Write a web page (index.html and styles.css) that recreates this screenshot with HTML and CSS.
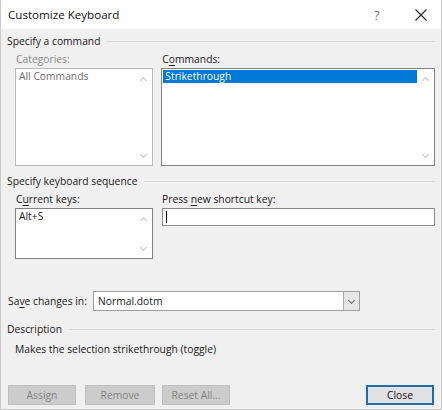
FILE: index.html
```html
<!DOCTYPE html>
<html>
<head>
<meta charset="utf-8">
<link rel="stylesheet" href="styles.css">
</head>
<body>
<div class="dialog">
  <div class="titlebar">
    <span class="title">Customize Keyboard</span>
    <span class="help">?</span>
    <span class="close-x"><svg width="12" height="12" viewBox="0 0 12 12"><path d="M0.5 0.5 L11.5 11.5 M11.5 0.5 L0.5 11.5" stroke="#222" stroke-width="1.1" fill="none"/></svg></span>
  </div>
  <div class="content">
    <div class="group-head"><span>Specify a command</span><span class="rule"></span></div>
    <div class="pair">
      <div class="col left">
        <div class="label disabled">Categories:</div>
        <div class="listbox tall disabled-box">
          <div class="items"><div class="item dim">All Commands</div></div>
          <div class="scroll"><span class="chev up"></span><span class="chev down"></span></div>
        </div>
      </div>
      <div class="col right">
        <div class="label">C<u>o</u>mmands:</div>
        <div class="listbox tall">
          <div class="items"><div class="item selected">Strikethrough</div></div>
          <div class="scroll"><span class="chev up"></span><span class="chev down"></span></div>
        </div>
      </div>
    </div>

    <div class="group-head second"><span>Specify keyboard sequence</span><span class="rule"></span></div>
    <div class="pair">
      <div class="col left">
        <div class="label">C<u>u</u>rrent keys:</div>
        <div class="listbox short">
          <div class="items"><div class="item">Alt+S</div></div>
          <div class="scroll"><span class="chev up"></span><span class="chev down"></span></div>
        </div>
      </div>
      <div class="col right">
        <div class="label">Press <u>n</u>ew shortcut key:</div>
        <div class="textbox"><span class="caret"></span></div>
      </div>
    </div>

    <div class="save-row">
      <span class="save-label">Sa<u>v</u>e changes in:</span>
      <div class="combo">
        <span class="combo-text">Normal.dotm</span>
        <span class="combo-btn"><span class="chev down dark"></span></span>
      </div>
    </div>

    <div class="group-head third"><span>Description</span><span class="rule"></span></div>
    <div class="desc">Makes the selection strikethrough (toggle)</div>

    <div class="buttons">
      <button class="btn disabled-btn">Assign</button>
      <button class="btn disabled-btn">Remove</button>
      <button class="btn disabled-btn">Reset All...</button>
      <span class="spacer"></span>
      <button class="btn default-btn">Close</button>
    </div>
  </div>
</div>
</body>
</html>
```

FILE: styles.css
```css
* { box-sizing: border-box; }
html, body { margin: 0; padding: 0; }
body {
  width: 442px;
  height: 410px;
  overflow: hidden;
  font-family: "Open Sans", "Noto Sans", sans-serif;
  font-size: 10.3px;
  color: #1a1a1a;
  background: #f0f0f0;
}
.dialog {
  width: 442px;
  height: 410px;
  background: #f0f0f0;
  border: 1px solid #c9c9c9;
  border-top: none;
  display: flex;
  flex-direction: column;
}
.titlebar {
  height: 29px;
  background: #fff;
  display: flex;
  align-items: center;
  padding-left: 7px;
}
.title { font-size: 11.6px; flex: 1; color: #111; }
.help { font-size: 13px; font-weight: 300; width: 14px; margin-right: 27px; color: #222; }
.close-x { width: 12px; height: 12px; margin-right: 14px; display: flex; }
.content {
  flex: 1;
  padding: 5px 6px 0 6px;
  display: flex;
  flex-direction: column;
}
.group-head {
  display: flex;
  align-items: center;
  height: 14px;
  line-height: 14px;
}
.group-head .rule {
  flex: 1;
  height: 1px;
  background: #dadada;
  margin-left: 7px;
  margin-top: 1px;
}
.group-head.second { margin-top: 8px; }
.group-head.third { margin-top: 11px; }
.pair {
  display: flex;
  gap: 8px;
  padding-left: 8px;
}
.col.left { width: 139px; }
.col.right { width: 275px; }
.label {
  height: 20px;
  line-height: 16px;
  padding-top: 3px;
  padding-left: 1px;
}
.label.disabled { color: #8a8a8a; }
u { text-decoration-thickness: 1px; text-underline-offset: 2px; }
.listbox {
  background: #fff;
  border: 1px solid #828282;
  display: flex;
}
.listbox.disabled-box { border-color: #b9b9b9; }
.listbox.tall { height: 98px; }
.listbox.short { height: 51px; }
.items { flex: 1; padding: 1px 0 0 1px; }
.item { height: 13px; line-height: 13px; padding-left: 2px; }
.item.dim { color: #6d6d6d; }
.item.selected { background: #0078d7; color: #fff; }
.scroll {
  width: 17px;
  display: flex;
  flex-direction: column;
  justify-content: space-between;
  align-items: center;
  padding: 7px 0 6px 0;
}
.chev {
  width: 5px;
  height: 5px;
  border-left: 1px solid #c2c2c2;
  border-top: 1px solid #c2c2c2;
  display: block;
}
.chev.up { transform: rotate(45deg); margin-top: 2px; }
.chev.down { transform: rotate(225deg); margin-bottom: 2px; }
.chev.dark { border-color: #6a6a6a; }
.textbox {
  height: 18px;
  background: #fff;
  border: 1px solid #8c8c8c;
  margin-left: 1px;
  width: 273px;
  display: flex;
  align-items: center;
  padding-left: 3px;
}
.caret { width: 1px; height: 12px; background: #000; }
.save-row {
  display: flex;
  align-items: center;
  margin-top: 32px;
  height: 20px;
}
.save-label { width: 86px; padding-left: 1px; }
.combo {
  width: 267px;
  height: 20px;
  background: #fff;
  border: 1px solid #9e9e9e;
  display: flex;
  align-items: center;
}
.combo-text { flex: 1; padding-left: 4px; }
.combo-btn {
  width: 16px;
  height: 18px;
  background: #e6e6e6;
  border-left: 1px solid #acacac;
  display: flex;
  align-items: center;
  justify-content: center;
}
.desc { padding-left: 8px; margin-top: 5px; height: 16px; line-height: 16px; }
.buttons {
  display: flex;
  gap: 8px;
  margin-top: 28px;
  padding-right: 1px;
}
.btn {
  font-family: inherit;
  font-size: 10.3px;
  height: 20px;
  padding: 0;
  margin: 0;
  line-height: 16px;
}
.disabled-btn {
  background: #cccccc;
  border: 1px solid #bfbfbf;
  color: #838383;
}
.btn:nth-child(1) { width: 68px; margin-left: 1px; }
.btn:nth-child(2) { width: 70px; margin-left: 1px; }
.btn:nth-child(3) { width: 68px; margin-left: -1px; }
.spacer { flex: 1; }
.default-btn {
  width: 68px;
  background: #e1e1e1;
  border: 2px solid #1f6fb0;
  color: #111;
}
```
